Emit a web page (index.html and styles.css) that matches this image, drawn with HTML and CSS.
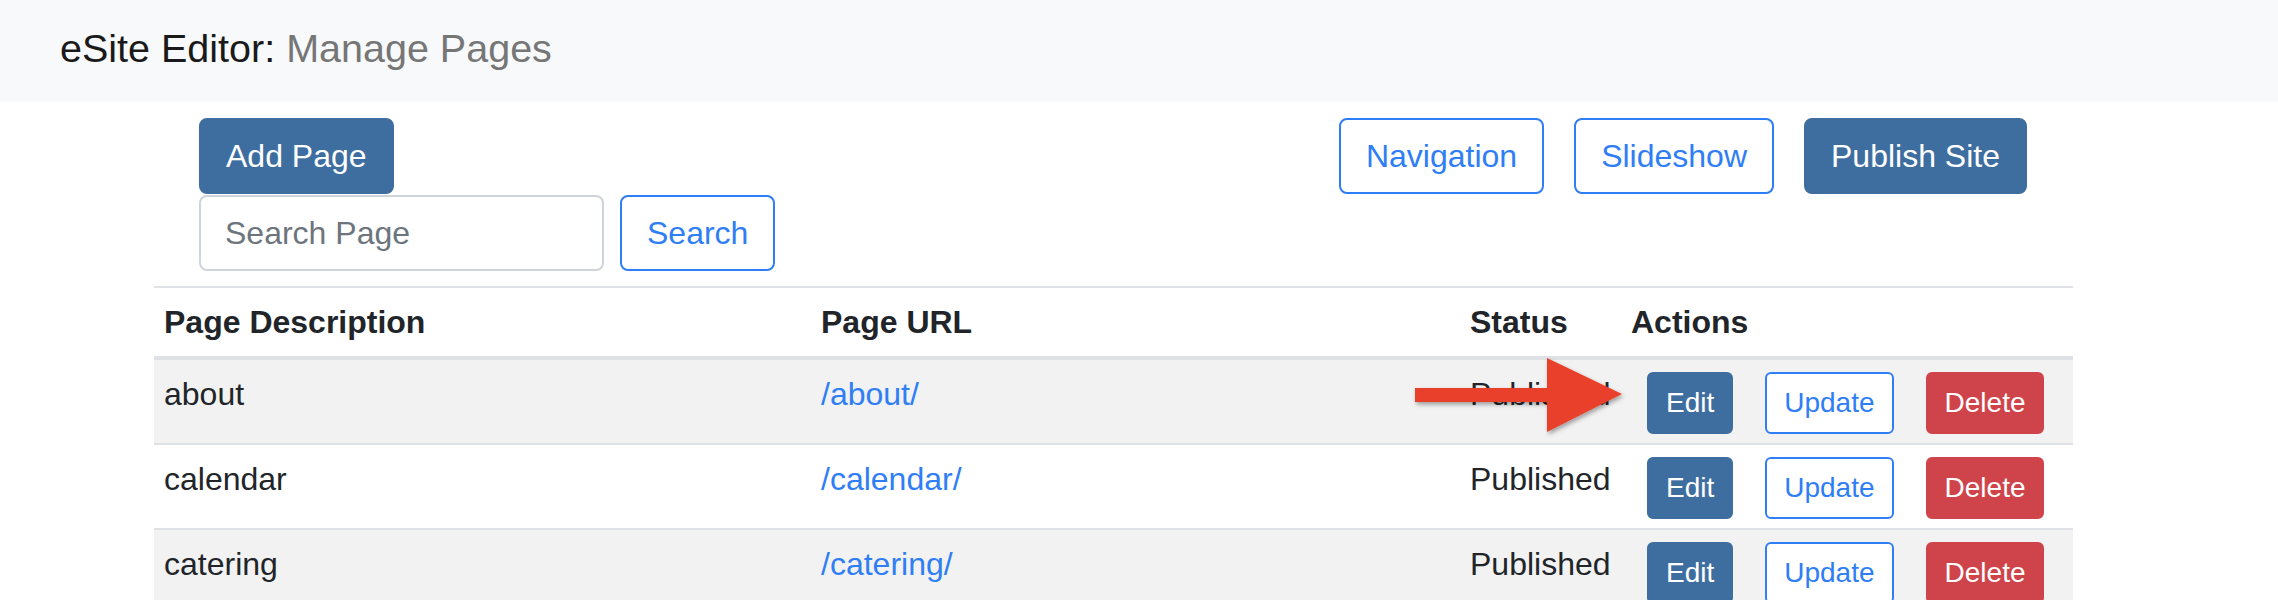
FILE: index.html
```html
<!DOCTYPE html>
<html lang="en">
<head>
<meta charset="utf-8">
<title>eSite Editor: Manage Pages</title>
<link rel="stylesheet" href="styles.css">
</head>
<body>
<header class="topbar">
  <span class="brand">eSite Editor: <span class="brand-muted">Manage Pages</span></span>
</header>
<main class="page">
  <div class="toolbar">
    <div class="toolbar-left">
      <button class="btn btn-primary">Add Page</button>
      <form class="search">
        <input class="search-input" type="text" placeholder="Search Page">
        <button class="btn btn-outline" type="button">Search</button>
      </form>
    </div>
    <div class="toolbar-right">
      <button class="btn btn-outline">Navigation</button>
      <button class="btn btn-outline">Slideshow</button>
      <button class="btn btn-primary">Publish Site</button>
    </div>
  </div>

  <table class="pages">
    <colgroup>
      <col class="col-desc">
      <col class="col-url">
      <col class="col-status">
      <col class="col-actions">
    </colgroup>
    <thead>
      <tr>
        <th>Page Description</th>
        <th>Page URL</th>
        <th>Status</th>
        <th>Actions</th>
      </tr>
    </thead>
    <tbody>
      <tr class="striped">
        <td>about</td>
        <td><a href="#">/about/</a></td>
        <td>Published</td>
        <td class="actions"><div class="action-group"><button class="btn-sm btn-primary">Edit</button><button class="btn-sm btn-outline">Update</button><button class="btn-sm btn-danger">Delete</button></div></td>
      </tr>
      <tr>
        <td>calendar</td>
        <td><a href="#">/calendar/</a></td>
        <td>Published</td>
        <td class="actions"><div class="action-group"><button class="btn-sm btn-primary">Edit</button><button class="btn-sm btn-outline">Update</button><button class="btn-sm btn-danger">Delete</button></div></td>
      </tr>
      <tr class="striped">
        <td>catering</td>
        <td><a href="#">/catering/</a></td>
        <td>Published</td>
        <td class="actions"><div class="action-group"><button class="btn-sm btn-primary">Edit</button><button class="btn-sm btn-outline">Update</button><button class="btn-sm btn-danger">Delete</button></div></td>
      </tr>
    </tbody>
  </table>

  <svg class="arrow" width="224" height="96" viewBox="0 0 224 96" aria-hidden="true">
    <defs>
      <filter id="shadow" x="-10%" y="-20%" width="130%" height="150%">
        <feDropShadow dx="1.5" dy="2.5" stdDeviation="2" flood-color="#000" flood-opacity="0.35"/>
      </filter>
    </defs>
    <g filter="url(#shadow)" fill="#e8412a">
      <rect x="5" y="36" width="135" height="14"/>
      <polygon points="137,6 212,42 137,80"/>
    </g>
  </svg>
</main>
</body>
</html>
```

FILE: styles.css
```css
* {
  box-sizing: border-box;
}

html, body {
  margin: 0;
  padding: 0;
  background: #ffffff;
}

body {
  font-family: "Liberation Sans", Arial, sans-serif;
  font-size: 32px;
  line-height: 1.5;
  color: #212529;
}

.topbar {
  height: 102px;
  background: #f8f9fa;
  padding: 18px 60px 0;
}

.brand {
  font-size: 39.5px;
  line-height: 60px;
  color: #1a1a1a;
}

.brand-muted {
  color: #767676;
}

.page {
  position: relative;
  margin-left: 154px;
  width: 1919px;
}

.toolbar {
  display: flex;
  justify-content: space-between;
  align-items: flex-start;
  padding: 16px 46px 0 45px;
}

.toolbar-left {
  display: flex;
  flex-direction: column;
  align-items: flex-start;
  gap: 1px;
}

.toolbar-right {
  display: flex;
  gap: 30px;
}

.search {
  display: flex;
  gap: 16px;
  margin: 0;
}

.btn {
  font-family: inherit;
  font-size: 32px;
  line-height: 48px;
  padding: 12px 25px;
  border: 2px solid transparent;
  border-radius: 8px;
  background: transparent;
  cursor: pointer;
}

.btn-sm {
  font-family: inherit;
  font-size: 28px;
  line-height: 42px;
  padding: 8px 17px;
  border: 2px solid transparent;
  border-radius: 6px;
  background: transparent;
  cursor: pointer;
}

.btn-primary {
  background: #3e6e9f;
  border-color: #3e6e9f;
  color: #ffffff;
}

.btn-outline {
  background: #ffffff;
  border-color: #2f7ef5;
  color: #2f7ef5;
}

.btn-danger {
  background: #cf444b;
  border-color: #cf444b;
  color: #ffffff;
}

.search-input {
  width: 405px;
  height: 76px;
  font-family: inherit;
  font-size: 32px;
  line-height: 48px;
  padding: 12px 24px;
  border: 2px solid #ced4da;
  border-radius: 8px;
  color: #495057;
  background: #ffffff;
}

.search-input::placeholder {
  color: #6c757d;
}

.pages {
  width: 1919px;
  margin-top: 15px;
  border-collapse: collapse;
  table-layout: fixed;
}

.col-desc { width: 657px; }
.col-url { width: 649px; }
.col-status { width: 161px; }
.col-actions { width: 452px; }

.pages th,
.pages td {
  padding: 10px;
  text-align: left;
  vertical-align: top;
  border-top: 2px solid #dee2e6;
  white-space: nowrap;
}

.pages th {
  font-weight: 700;
  border-bottom: 4px solid #dee2e6;
}

.pages td.actions {
  padding: 12px 0 9px 26px;
}

.action-group {
  display: flex;
  gap: 32px;
}

.pages tr.striped {
  background: #f2f2f2;
}

.pages a {
  color: #2f7ef5;
  text-decoration: none;
}

.arrow {
  position: absolute;
  left: 1256px;
  top: 250px;
}
```
